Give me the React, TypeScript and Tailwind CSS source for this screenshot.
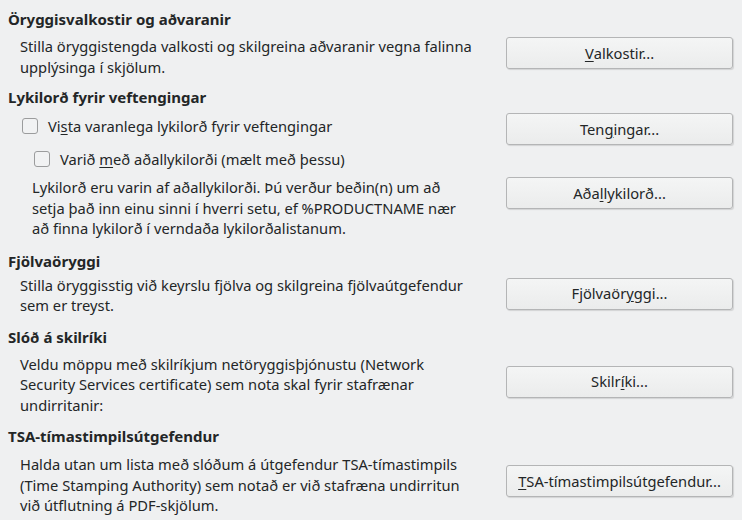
import React from "react";

const font = { fontFamily: '"Noto Sans", "Open Sans", sans-serif' };

function Btn({ children, className = "" }: { children: React.ReactNode; className?: string }) {
  return (
    <button
      className={
        "w-[227px] h-[32px] shrink-0 rounded-[3px] border border-[#b4b5b6] bg-gradient-to-b from-[#f4f5f5] to-[#ebecec] text-[14.7px] text-[#232627] shadow-[1px_1px_1px_rgba(0,0,0,0.12)] flex items-center justify-center " +
        className
      }
    >
      {children}
    </button>
  );
}

function Box() {
  return <span className="w-[16px] h-[16px] shrink-0 rounded-[3px] border border-[#9b9c9d] bg-[#f1f2f3]" />;
}

function Lines({ lines, className = "" }: { lines: string[]; className?: string }) {
  return (
    <div className={"flex flex-col " + className}>
      {lines.map((l, i) => (
        <div key={i} className="whitespace-nowrap h-[20.5px] leading-[20.5px]">
          {l}
        </div>
      ))}
    </div>
  );
}

function H({ children, className = "" }: { children: React.ReactNode; className?: string }) {
  return <div className={"font-bold text-[15px] h-[20px] leading-[20px] pl-[8px] " + className}>{children}</div>;
}

const U = ({ c }: { c: string }) => <span className="underline underline-offset-[2px]">{c}</span>;

export default function App() {
  return (
    <div
      style={font}
      className="w-[742px] h-[520px] bg-[#eff0f1] text-[#232627] text-[14.7px] overflow-hidden pt-[9px] pr-[9px]"
    >
      <H>Öryggisvalkostir og aðvaranir</H>
      <div className="flex items-start mt-[7px]">
        <Lines
          className="flex-1 pl-[20px]"
          lines={[
            "Stilla öryggistengda valkosti og skilgreina aðvaranir vegna falinna",
            "upplýsinga í skjölum.",
          ]}
        />
        <Btn className="mt-[1px]">
          <U c="V" />alkostir...
        </Btn>
      </div>

      <H className="mt-[10px]">Lykilorð fyrir veftengingar</H>
      <div className="flex items-start mt-[6px]">
        <div className="flex-1 flex items-center gap-[10px] pl-[22px] mt-[3px] h-[20px]">
          <Box />
          <span className="whitespace-nowrap">
            Vi<U c="s" />ta varanlega lykilorð fyrir veftengingar
          </span>
        </div>
        <Btn>
          Ten<U c="g" />ingar...
        </Btn>
      </div>
      <div className="flex items-start mt-[4px]">
        <div className="flex-1 flex flex-col">
          <div className="flex items-center gap-[10px] pl-[34px] h-[20px]">
            <Box />
            <span className="whitespace-nowrap">
              Varið <U c="m" />eð aðallykilorði (mælt með þessu)
            </span>
          </div>
          <Lines
            className="pl-[32px] mt-[8px]"
            lines={[
              "Lykilorð eru varin af aðallykilorði. Þú verður beðin(n) um að",
              "setja það inn einu sinni í hverri setu, ef %PRODUCTNAME nær",
              "að finna lykilorð í verndaða lykilorðalistanum.",
            ]}
          />
        </div>
        <Btn className="mt-[28px]">
          Aða<U c="l" />lykilorð...
        </Btn>
      </div>

      <H className="mt-[12px]">Fjölvaöryggi</H>
      <div className="flex items-start mt-[4px]">
        <Lines
          className="flex-1 pl-[20px]"
          lines={[
            "Stilla öryggisstig við keyrslu fjölva og skilgreina fjölvaútgefendur",
            "sem er treyst.",
          ]}
        />
        <Btn className="mt-[3px]">
          Fjölvaör<U c="y" />ggi...
        </Btn>
      </div>

      <H className="mt-[11px]">Slóð á skilríki</H>
      <div className="flex items-start mt-[7px]">
        <Lines
          className="flex-1 pl-[20px]"
          lines={[
            "Veldu möppu með skilríkjum netöryggisþjónustu (Network",
            "Security Services certificate) sem nota skal fyrir stafrænar",
            "undirritanir:",
          ]}
        />
        <Btn className="mt-[12px]">
          Skilr<U c="í" />ki...
        </Btn>
      </div>

      <H className="mt-[11px]">TSA-tímastimpilsútgefendur</H>
      <div className="flex items-start mt-[8px]">
        <Lines
          className="flex-1 pl-[20px]"
          lines={[
            "Halda utan um lista með slóðum á útgefendur TSA-tímastimpils",
            "(Time Stamping Authority) sem notað er við stafræna undirritun",
            "við útflutning á PDF-skjölum.",
          ]}
        />
        <Btn className="mt-[11px]">
          <U c="T" />SA-tímastimpilsútgefendur...
        </Btn>
      </div>
    </div>
  );
}
